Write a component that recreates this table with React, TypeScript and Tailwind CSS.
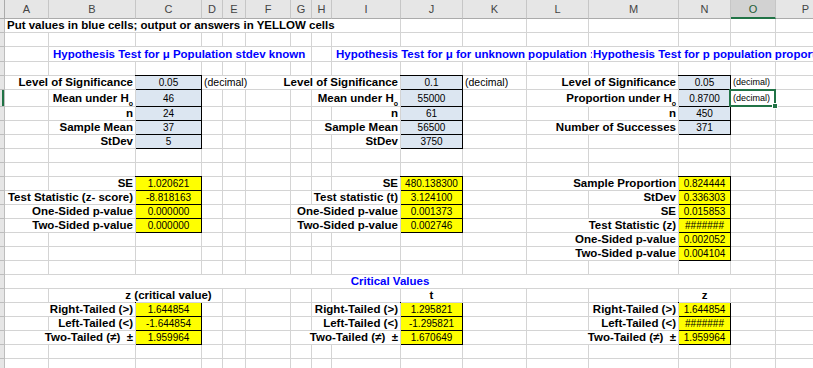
import type { ReactNode } from 'react'

type Kind = 'lab' | 'ttl' | 'blu' | 'ctr' | 'cv' | 'in' | 'out' | 'dec' | 'dec2'

interface Cell {
  at: string
  k: Kind
  t: ReactNode
  span?: number
  sel?: boolean
}

interface Row {
  h: string
  cells: Cell[]
  low?: boolean
  active?: boolean
}

const COLS = ['A', 'B', 'C', 'D', 'E', 'F', 'G', 'H', 'I', 'J', 'K', 'L', 'M', 'N', 'O', 'P']

const GRID =
  'grid grid-cols-[5px_44px_87px_66px_21px_23px_45px_21px_20px_69px_62px_64px_62px_90px_52px_45px_60px]'

const SPAN: Record<number, string> = {
  1: 'col-span-1',
  15: 'col-span-15',
}

const H0 = (
  <>
    H<span className="relative top-[2px] text-[7px] leading-none">o</span>
  </>
)

const lab = (at: string, t: ReactNode): Cell => ({ at, k: 'lab', t })
const inp = (at: string, t: string): Cell => ({ at, k: 'in', t })
const out = (at: string, t: string): Cell => ({ at, k: 'out', t })

const rows: Row[] = [
  { h: 'h-[14px]', cells: [{ at: 'A', k: 'ttl', t: 'Put values in blue cells; output or answers in YELLOW cells' }] },
  { h: 'h-[14px]', cells: [] },
  {
    h: 'h-[15px]',
    cells: [
      { at: 'B', k: 'blu', t: 'Hypothesis Test for μ Population stdev known' },
      { at: 'I', k: 'blu', t: 'Hypothesis Test for μ for unknown population :' },
      { at: 'M', k: 'blu', t: 'Hypothesis Test for p population proportion' },
    ],
  },
  { h: 'h-[14px]', cells: [] },
  {
    h: 'h-[14px]',
    cells: [
      lab('B', 'Level of Significance'), inp('C', '0.05'), { at: 'D', k: 'dec', t: '(decimal)' },
      lab('I', 'Level of Significance'), inp('J', '0.1'), { at: 'K', k: 'dec', t: '(decimal)' },
      lab('M', 'Level of Significance'), inp('N', '0.05'), { at: 'O', k: 'dec2', t: '(decimal)' },
    ],
  },
  {
    h: 'h-[17px]',
    low: true,
    active: true,
    cells: [
      lab('B', <>Mean under {H0}</>), inp('C', '46'),
      lab('I', <>Mean under {H0}</>), inp('J', '55000'),
      lab('M', <>Proportion under {H0}</>), inp('N', '0.8700'),
      { at: 'O', k: 'dec2', t: '(decimal)', sel: true },
    ],
  },
  {
    h: 'h-[14px]',
    cells: [lab('B', 'n'), inp('C', '24'), lab('I', 'n'), inp('J', '61'), lab('M', 'n'), inp('N', '450')],
  },
  {
    h: 'h-[14px]',
    cells: [
      lab('B', 'Sample Mean'), inp('C', '37'),
      lab('I', 'Sample Mean'), inp('J', '56500'),
      lab('M', 'Number of Successes'), inp('N', '371'),
    ],
  },
  { h: 'h-[14px]', cells: [lab('B', 'StDev'), inp('C', '5'), lab('I', 'StDev'), inp('J', '3750')] },
  { h: 'h-[14px]', cells: [] },
  { h: 'h-[14px]', cells: [] },
  {
    h: 'h-[14px]',
    cells: [
      lab('B', 'SE'), out('C', '1.020621'),
      lab('I', 'SE'), out('J', '480.138300'),
      lab('M', 'Sample Proportion'), out('N', '0.824444'),
    ],
  },
  {
    h: 'h-[14px]',
    cells: [
      lab('B', 'Test Statistic (z- score)'), out('C', '-8.818163'),
      lab('I', 'Test statistic (t)'), out('J', '3.124100'),
      lab('M', 'StDev'), out('N', '0.336303'),
    ],
  },
  {
    h: 'h-[14px]',
    cells: [
      lab('B', 'One-Sided p-value'), out('C', '0.000000'),
      lab('I', 'One-Sided p-value'), out('J', '0.001373'),
      lab('M', 'SE'), out('N', '0.015853'),
    ],
  },
  {
    h: 'h-[14px]',
    cells: [
      lab('B', 'Two-Sided p-value'), out('C', '0.000000'),
      lab('I', 'Two-Sided p-value'), out('J', '0.002746'),
      lab('M', 'Test Statistic (z)'), out('N', '#######'),
    ],
  },
  { h: 'h-[14px]', cells: [lab('M', 'One-Sided p-value'), out('N', '0.002052')] },
  { h: 'h-[14px]', cells: [lab('M', 'Two-Sided p-value'), out('N', '0.004104')] },
  { h: 'h-[14px]', cells: [] },
  { h: 'h-[14px]', cells: [{ at: 'A', k: 'cv', t: 'Critical Values', span: 15 }] },
  {
    h: 'h-[14px]',
    cells: [
      { at: 'C', k: 'ctr', t: 'z (critical value)' },
      { at: 'J', k: 'ctr', t: 't' },
      { at: 'N', k: 'ctr', t: 'z' },
    ],
  },
  {
    h: 'h-[14px]',
    cells: [
      lab('B', 'Right-Tailed (>)'), out('C', '1.644854'),
      lab('I', 'Right-Tailed (>)'), out('J', '1.295821'),
      lab('M', 'Right-Tailed (>)'), out('N', '1.644854'),
    ],
  },
  {
    h: 'h-[14px]',
    cells: [
      lab('B', 'Left-Tailed (<)'), out('C', '-1.644854'),
      lab('I', 'Left-Tailed (<)'), out('J', '-1.295821'),
      lab('M', 'Left-Tailed (<)'), out('N', '#######'),
    ],
  },
  {
    h: 'h-[14px]',
    cells: [
      lab('B', 'Two-Tailed (≠)  ±'), out('C', '1.959964'),
      lab('I', 'Two-Tailed (≠)  ±'), out('J', '1.670649'),
      lab('M', 'Two-Tailed (≠)  ±'), out('N', '1.959964'),
    ],
  },
  { h: 'h-[14px]', cells: [] },
  { h: 'h-[14px]', cells: [] },
]

function SheetCell({ cell, low }: { cell: Cell; low?: boolean }) {
  const span = SPAN[cell.span ?? 1]
  const vAlign = low ? 'items-end pb-[1px]' : 'items-center'

  if (cell.k === 'in' || cell.k === 'out') {
    return (
      <div
        className={`${span} flex justify-center border-r border-b border-black text-[10px] leading-[13px] shadow-[-1px_-1px_0_0_#000,0_-1px_0_0_#000] ${vAlign} ${
          cell.k === 'in' ? 'bg-[#dce6f1]' : 'bg-[#ffff00]'
        }`}
      >
        {cell.t}
      </div>
    )
  }

  let justify = 'justify-start'
  let text = 'font-bold text-[11.5px] text-black px-[2px]'
  if (cell.k === 'lab') justify = 'justify-end'
  if (cell.k === 'ctr' || cell.k === 'cv') justify = 'justify-center'
  if (cell.k === 'blu') text = 'font-bold text-[11.5px] text-[#0000ff] ml-[3px] pl-[1px] pr-[2px]'
  if (cell.k === 'cv') text = 'font-bold text-[11.5px] text-[#0000ff] px-[2px]'
  if (cell.k === 'dec') text = 'text-[10.5px] text-black pl-[2px] pr-[2px]'
  if (cell.k === 'dec2') text = 'text-[9px] text-black pl-[2px] pr-[2px]'

  return (
    <div className={`${span} relative flex border-r border-b border-[#d4d4d4] ${justify}`}>
      <span className={`relative z-10 flex shrink-0 whitespace-pre bg-white leading-[13px] ${vAlign} ${text}`}>
        {cell.t}
      </span>
      {cell.sel && (
        <>
          <div className="pointer-events-none absolute -top-[1px] -right-[1px] -bottom-[1px] -left-[2px] z-30 border-2 border-[#217346]" />
          <div className="absolute -right-[3px] -bottom-[3px] z-30 h-[6px] w-[6px] border border-white bg-[#217346]" />
        </>
      )}
    </div>
  )
}

function SheetRow({ row }: { row: Row }) {
  const items: ReactNode[] = []
  let i = 0
  while (i < COLS.length) {
    const cell = row.cells.find(c => c.at === COLS[i])
    if (cell) {
      items.push(<SheetCell key={COLS[i]} cell={cell} low={row.low} />)
      i += cell.span ?? 1
    } else {
      items.push(<div key={COLS[i]} className="border-r border-b border-[#d4d4d4]" />)
      i++
    }
  }

  return (
    <div className={`${GRID} ${row.h}`}>
      <div className="relative z-20 border-r border-b border-[#bdbdbd] bg-[#e6e6e6]">
        {row.active && <div className="absolute top-0 right-0 bottom-0 w-[2px] bg-[#217346]" />}
      </div>
      {items}
    </div>
  )
}

export default function App() {
  return (
    <div className="h-[368px] w-[813px] overflow-hidden bg-white font-['Liberation_Sans',Arial,sans-serif] text-black">
      <div className={`${GRID} h-[19px] bg-[#e6e6e6]`}>
        <div className="border-r border-b border-[#ababab] bg-[#e6e6e6]" />
        {COLS.map(c => (
          <div
            key={c}
            className={
              c === 'O'
                ? 'flex items-end justify-center border-r border-b-2 border-r-[#c6c6c6] border-b-[#217346] bg-[#d2d2d2] pb-[1px] text-[11px] leading-[13px] text-[#1d5c36]'
                : 'flex items-end justify-center border-r border-b border-r-[#c6c6c6] border-b-[#ababab] pb-[2px] text-[11px] leading-[13px] text-[#444]'
            }
          >
            {c}
          </div>
        ))}
      </div>
      {rows.map((row, idx) => (
        <SheetRow key={idx} row={row} />
      ))}
    </div>
  )
}
